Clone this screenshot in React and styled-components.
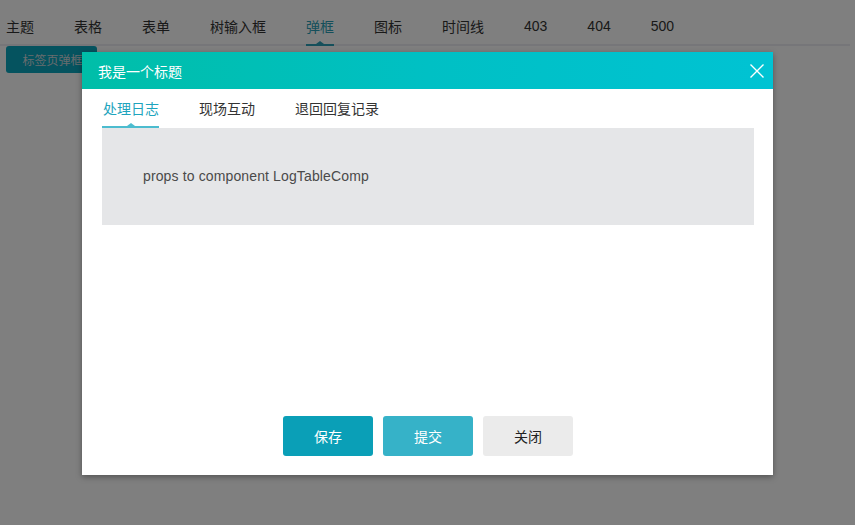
import React, { useState } from 'react';
import styled, { createGlobalStyle } from 'styled-components';

const GlobalStyle = createGlobalStyle`
    html, body {
        margin: 0;
        padding: 0;
        background: #fff;
        font-family: "Liberation Sans", "Noto Sans CJK SC", sans-serif;
        font-size: 14px;
    }
`

const Page = styled.div`
    width: 855px;
    height: 525px;
    position: relative;
    overflow: hidden;
`

const Nav = styled.div`
    display: flex;
    gap: 40px;
    padding: 0 6px;
    margin-right: 5px;
    height: 46px;
    border-bottom: 2px solid #ececf2;
    box-sizing: border-box;
`

const NavItem = styled.div`
    position: relative;
    display: flex;
    align-items: center;
    height: 44px;
    padding-top: 8px;
    box-sizing: border-box;
    color: ${p => (p.active ? '#2a9fb6' : '#333')};

    &::after {
        content: '';
        display: ${p => (p.active ? 'block' : 'none')};
        position: absolute;
        left: 0;
        right: 0;
        bottom: -2px;
        height: 2px;
        background: #2a9fb6;
    }

    &::before {
        content: '';
        display: ${p => (p.active ? 'block' : 'none')};
        position: absolute;
        left: 50%;
        bottom: 0;
        margin-left: -4px;
        border: 4px solid transparent;
        border-bottom: 3px solid #2a9fb6;
        border-top: 0;
    }
`

const Toolbar = styled.div`
    padding: 0 6px;
`

const OpenButton = styled.button`
    width: 91px;
    height: 27px;
    border: 0;
    border-radius: 3px;
    background: #0aa6bf;
    color: #d0d8dc;
    font: 12px "Liberation Sans", "Noto Sans CJK SC", sans-serif;
    padding: 0 0 0 2px;
    white-space: nowrap;
    overflow: hidden;
`

const Mask = styled.div`
    position: absolute;
    inset: 0;
    background: rgba(0, 0, 0, 0.5);
`

const Modal = styled.div`
    position: absolute;
    left: 82px;
    top: 52px;
    width: 691px;
    height: 423px;
    background: #fff;
    display: flex;
    flex-direction: column;
    box-shadow: 0 2px 6px rgba(0, 0, 0, 0.35);
`

const Header = styled.div`
    height: 37px;
    display: flex;
    align-items: center;
    justify-content: space-between;
    padding: 0 8px 0 16px;
    background: linear-gradient(90deg, #00bea8 0%, #00c0c4 50%, #00c3d3 100%);
    color: #fff;
`

const Title = styled.div`
    font-size: 14px;
`

const Close = styled.div`
    width: 16px;
    height: 16px;
    display: flex;
`

const Body = styled.div`
    flex: 1;
    display: flex;
    flex-direction: column;
    padding: 0 19px 0 20px;
`

const Tabs = styled.div`
    display: flex;
    gap: 39px;
`

const Tab = styled.div`
    position: relative;
    padding: 10px 0 7px 1px;
    line-height: 20px;
    color: ${p => (p.active ? '#1ea4bd' : '#333')};
    border-bottom: 2px solid ${p => (p.active ? '#4cbccf' : 'transparent')};
    cursor: pointer;

    &::after {
        content: '';
        display: ${p => (p.active ? 'block' : 'none')};
        position: absolute;
        left: 50%;
        bottom: 0;
        margin-left: -4px;
        border: 4px solid transparent;
        border-bottom: 3px solid #4cbccf;
        border-top: 0;
    }
`

const Panel = styled.div`
    background: #e5e6e8;
    padding: 40px 41px;
    line-height: 17px;
    color: #4a4a4a;
    letter-spacing: 0.13px;
    font-family: "Liberation Sans", sans-serif;
`

const Footer = styled.div`
    margin-top: auto;
    display: flex;
    justify-content: center;
    gap: 10px;
    padding-bottom: 19px;
`

const Button = styled.button`
    width: 90px;
    height: 40px;
    border: 0;
    border-radius: 3px;
    font: 14px "Liberation Sans", "Noto Sans CJK SC", sans-serif;
    background: ${p => p.bg};
    color: ${p => p.fg || '#fff'};
`

const navItems = ['主题', '表格', '表单', '树输入框', '弹框', '图标', '时间线', '403', '404', '500']
const tabs = ['处理日志', '现场互动', '退回回复记录']

export default function App() {
    const [active, setActive] = useState(0)

    return (
        <Page>
            <GlobalStyle />
            <Nav>
                {navItems.map((name, key) => (
                    <NavItem key={key} active={name === '弹框'}>{name}</NavItem>
                ))}
            </Nav>
            <Toolbar>
                <OpenButton>标签页弹框</OpenButton>
            </Toolbar>
            <Mask />
            <Modal>
                <Header>
                    <Title>我是一个标题</Title>
                    <Close>
                        <svg width="16" height="16" viewBox="0 0 16 16">
                            <path d="M1.5 1.5 L14.5 14.5 M14.5 1.5 L1.5 14.5" stroke="#fff" strokeWidth="1.4" fill="none" />
                        </svg>
                    </Close>
                </Header>
                <Body>
                    <Tabs>
                        {tabs.map((name, key) => (
                            <Tab key={key} active={key === active} onClick={() => setActive(key)}>{name}</Tab>
                        ))}
                    </Tabs>
                    <Panel>props to component LogTableComp</Panel>
                    <Footer>
                        <Button bg="#0a9fb7">保存</Button>
                        <Button bg="#36b2c8">提交</Button>
                        <Button bg="#ebebeb" fg="#222">关闭</Button>
                    </Footer>
                </Body>
            </Modal>
        </Page>
    )
}
